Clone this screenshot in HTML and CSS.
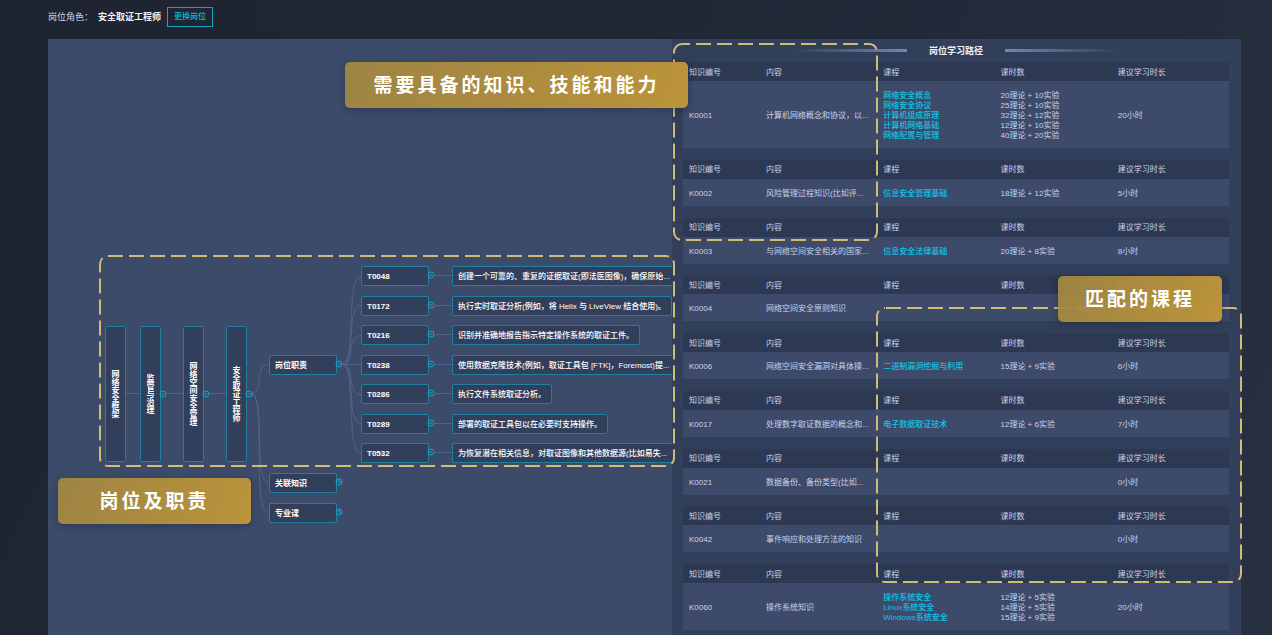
FILE: index.html
```
<!DOCTYPE html>
<html lang="zh-CN">
<head>
<meta charset="utf-8">
<title>岗位学习路径</title>
<link rel="stylesheet" href="styles.css">
</head>
<body>
<svg class="symbols" aria-hidden="true">
  <symbol id="minus" viewBox="0 0 8 8"><circle cx="4" cy="4" r="3" fill="none" stroke="currentColor"/><path d="M2.6 4h2.8" stroke="currentColor"/></symbol>
  <symbol id="plus" viewBox="0 0 8 8"><circle cx="4" cy="4" r="3" fill="none" stroke="currentColor"/><path d="M4 4.2V1.500M4 4.200h2M2.600 2.800L4 4.200" stroke="currentColor" fill="none"/></symbol>
</svg>
<div class="page">
  <header class="topbar">
    <span class="role-label">岗位角色：</span>
    <strong class="role-name">安全取证工程师</strong>
    <button class="switch" type="button">更换岗位</button>
  </header>
  <main class="board">
    <section class="map">
      <svg class="links" width="624" height="596" aria-hidden="true">
        <path d="M77 354.500H92M118 354.500H136M161 354.500H178"/>
        <path d="M203 354.500C217 354.500 205 325.500 221 325.500M203 354.500C218 354.500 204 443.500 221 443.500M203 354.500C220 354.500 202 473.500 221 473.500"/>
        <path d="M294 325.500H313M294 325.500C309 325.500 297 237.500 313 237.500M294 325.500C309 325.500 297 266.500 313 266.500M294 325.500C309 325.500 297 296.500 313 296.500M294 325.500C309 325.500 297 355.500 313 355.500M294 325.500C309 325.500 297 384.500 313 384.500M294 325.500C309 325.500 297 414.500 313 414.500"/>
      </svg>
      <div class="node tall t1">网络安全框架</div>
      <div class="node tall t2">监管与治理<button class="toggle" type="button" aria-label="收起"><svg><use href="#minus"/></svg></button></div>
      <div class="node tall t3">网络空间安全管理<button class="toggle" type="button" aria-label="收起"><svg><use href="#minus"/></svg></button></div>
      <div class="node tall t4">安全取证工程师<button class="toggle" type="button" aria-label="收起"><svg><use href="#minus"/></svg></button></div>
      <div class="node fixed duty">岗位职责<button class="toggle" type="button" aria-label="收起"><svg><use href="#minus"/></svg></button></div>
      <div class="node fixed related">关联知识<button class="toggle" type="button" aria-label="展开"><svg><use href="#plus"/></svg></button></div>
      <div class="node fixed major">专业课<button class="toggle" type="button" aria-label="展开"><svg><use href="#plus"/></svg></button></div>
      <ul class="tasks">
        <li><div class="node fixed">T0048<button class="toggle" type="button" aria-label="收起"><svg><use href="#minus"/></svg></button></div><div class="node">创建一个可靠的、重复的证据取证(即法医图像)，确保原始...</div></li>
        <li><div class="node fixed">T0172<button class="toggle" type="button" aria-label="收起"><svg><use href="#minus"/></svg></button></div><div class="node">执行实时取证分析(例如，将 Helix 与 LiveView 结合使用)。</div></li>
        <li><div class="node fixed">T0216<button class="toggle" type="button" aria-label="收起"><svg><use href="#minus"/></svg></button></div><div class="node">识别并准确地报告指示特定操作系统的取证工件。</div></li>
        <li><div class="node fixed">T0238<button class="toggle" type="button" aria-label="收起"><svg><use href="#minus"/></svg></button></div><div class="node">使用数据克隆技术(例如，取证工具包 [FTK]，Foremost)提...</div></li>
        <li><div class="node fixed">T0286<button class="toggle" type="button" aria-label="收起"><svg><use href="#minus"/></svg></button></div><div class="node">执行文件系统取证分析。</div></li>
        <li><div class="node fixed">T0289<button class="toggle" type="button" aria-label="收起"><svg><use href="#minus"/></svg></button></div><div class="node">部署的取证工具包以在必要时支持操作。</div></li>
        <li><div class="node fixed">T0532<button class="toggle" type="button" aria-label="收起"><svg><use href="#minus"/></svg></button></div><div class="node">为恢复潜在相关信息，对取证图像和其他数据源(比如易失...</div></li>
      </ul>
    </section>
    <section class="path">
      <h2 class="path-title">岗位学习路径</h2>
      <div class="tables">
        <table>
          <thead><tr><th class="id">知识编号</th><th>内容</th><th>课程</th><th>课时数</th><th>建议学习时长</th></tr></thead>
          <tbody><tr><td>K0001</td><td>计算机网络概念和协议，以...</td><td><a href="#">网络安全概念</a><a href="#">网络安全协议</a><a href="#">计算机组成原理</a><a href="#">计算机网络基础</a><a href="#">网络配置与管理</a></td><td>20理论 + 10实验<br>25理论 + 10实验<br>32理论 + 12实验<br>12理论 + 10实验<br>40理论 + 20实验</td><td>20小时</td></tr></tbody>
        </table>
        <table>
          <thead><tr><th class="id">知识编号</th><th>内容</th><th>课程</th><th>课时数</th><th>建议学习时长</th></tr></thead>
          <tbody><tr><td>K0002</td><td>风险管理过程知识(比如评...</td><td><a href="#">信息安全管理基础</a></td><td>18理论 + 12实验</td><td>5小时</td></tr></tbody>
        </table>
        <table>
          <thead><tr><th class="id">知识编号</th><th>内容</th><th>课程</th><th>课时数</th><th>建议学习时长</th></tr></thead>
          <tbody><tr><td>K0003</td><td>与网络空间安全相关的国家...</td><td><a href="#">信息安全法律基础</a></td><td>20理论 + 8实验</td><td>8小时</td></tr></tbody>
        </table>
        <table>
          <thead><tr><th class="id">知识编号</th><th>内容</th><th>课程</th><th>课时数</th><th>建议学习时长</th></tr></thead>
          <tbody><tr><td>K0004</td><td>网络空间安全原则知识</td><td></td><td></td><td>0小时</td></tr></tbody>
        </table>
        <table>
          <thead><tr><th class="id">知识编号</th><th>内容</th><th>课程</th><th>课时数</th><th>建议学习时长</th></tr></thead>
          <tbody><tr><td>K0006</td><td>网络空间安全漏洞对具体操...</td><td><a href="#">二进制漏洞挖掘与利用</a></td><td>15理论 + 9实验</td><td>6小时</td></tr></tbody>
        </table>
        <table>
          <thead><tr><th class="id">知识编号</th><th>内容</th><th>课程</th><th>课时数</th><th>建议学习时长</th></tr></thead>
          <tbody><tr><td>K0017</td><td>处理数字取证数据的概念和...</td><td><a href="#">电子数据取证技术</a></td><td>12理论 + 6实验</td><td>7小时</td></tr></tbody>
        </table>
        <table>
          <thead><tr><th class="id">知识编号</th><th>内容</th><th>课程</th><th>课时数</th><th>建议学习时长</th></tr></thead>
          <tbody><tr><td>K0021</td><td>数据备份、备份类型(比如...</td><td></td><td></td><td>0小时</td></tr></tbody>
        </table>
        <table>
          <thead><tr><th class="id">知识编号</th><th>内容</th><th>课程</th><th>课时数</th><th>建议学习时长</th></tr></thead>
          <tbody><tr><td>K0042</td><td>事件响应和处理方法的知识</td><td></td><td></td><td>0小时</td></tr></tbody>
        </table>
        <table>
          <thead><tr><th class="id">知识编号</th><th>内容</th><th>课程</th><th>课时数</th><th>建议学习时长</th></tr></thead>
          <tbody><tr><td>K0060</td><td>操作系统知识</td><td><a href="#">操作系统安全</a><a href="#">Linux系统安全</a><a href="#">Windows系统安全</a></td><td>12理论 + 5实验<br>14理论 + 5实验<br>15理论 + 9实验</td><td>20小时</td></tr></tbody>
        </table>
      </div>
    </section>
  </main>
  <svg class="frames" width="1272" height="635" aria-hidden="true">
    <rect x="674" y="44" width="203" height="196" rx="8" stroke-dashoffset="7"/>
    <rect x="100" y="256" width="574" height="210" rx="8"/>
    <rect x="877" y="308" width="364" height="274" rx="8" stroke-dashoffset="-1"/>
  </svg>
  <div class="callout need">需要具备的知识、技能和能力</div>
  <div class="callout post">岗位及职责</div>
  <div class="callout match">匹配的课程</div>
</div>
</body>
</html>
```
FILE: styles.css
```
* { box-sizing: border-box; }
body {
  margin: 0;
  font: 8px/10px "Liberation Sans", "Noto Sans CJK SC", sans-serif;
  color: #cbd3e6;
  background: #1f2532;
}
.symbols { position: absolute; width: 0; height: 0; }
.page {
  position: relative;
  display: flex;
  flex-direction: column;
  min-height: 100vh;
  padding: 0 31px 0 48px;
  overflow: hidden;
  background: linear-gradient(115deg, #1e2430 0%, #202735 45%, #283041 100%);
}
.topbar {
  display: flex;
  align-items: center;
  height: 39px;
  padding-bottom: 5px;
  font-size: 9px;
}
.role-name { margin: 0 6px 0 5px; color: #f1f3f8; }
.switch {
  height: 20px;
  padding: 0 6px;
  border: 1px solid #12a5c2;
  background: none;
  color: #16b5d3;
  font: inherit;
  font-size: 8px;
  font-weight: 500;
}
.board { flex: 1; display: grid; grid-template-columns: 624fr 569fr; }

.map { position: relative; overflow: hidden; background: #3d4b6b; }
.links { position: absolute; top: 0; left: 0; }
.links path { fill: none; stroke: #50638a; }
.node {
  position: relative;
  height: 20px;
  padding: 0 5px;
  border: 1px solid #21809f;
  border-radius: 2px;
  background: #323f5b;
  color: #fff;
  font-weight: 500;
  line-height: 19px;
  white-space: nowrap;
}
.fixed { width: 68px; }
.toggle {
  position: absolute;
  top: 4px;
  right: -7px;
  width: 8px;
  height: 8px;
  padding: 0;
  border: 0;
  background: none;
  color: #14a6c8;
}
.toggle svg { display: block; width: 8px; height: 8px; }
.tall {
  position: absolute;
  top: 287px;
  width: 21px;
  height: 136px;
  padding: 0;
  font-weight: bold;
  line-height: 21px;
  text-align: center;
  writing-mode: vertical-rl;
}
.tall .toggle { top: 63px; }
.t1 { left: 57px; }
.t2 { left: 92px; }
.t3 { left: 135px; }
.t4 { left: 178px; }
.duty, .related, .major { position: absolute; left: 221px; font-weight: bold; }
.duty { top: 316px; }
.related { top: 434px; }
.major { top: 464px; }
.tasks {
  position: absolute;
  top: 227px;
  left: 313px;
  display: flex;
  flex-direction: column;
  justify-content: space-between;
  height: 197px;
  margin: 0;
  padding: 0;
  list-style: none;
}
.tasks li {
  display: flex;
  gap: 23px;
  background: linear-gradient(#50638a, #50638a) 74px 9px / 17px 1px no-repeat;
}
.tasks .fixed { font-weight: bold; }

.path {
  display: flex;
  flex-direction: column;
  padding: 0 12px 5px 11px;
  background: #323f5a;
}
.path-title {
  display: flex;
  align-items: center;
  justify-content: center;
  gap: 22px;
  height: 23px;
  margin: 0;
  color: #eef1f7;
  font-size: 9px;
}
.path-title::before, .path-title::after {
  content: "";
  width: 115px;
  height: 3px;
  background: linear-gradient(90deg, transparent, #7685ab);
}
.path-title::after { background: linear-gradient(270deg, transparent, #7685ab); }
.tables { flex: 1; display: flex; flex-direction: column; justify-content: space-between; }
table { width: 100%; table-layout: fixed; border-collapse: collapse; background: #3d4a6a; }
th, td { text-align: left; font-weight: normal; white-space: nowrap; }
th { height: 19px; padding: 2px 0 0 6px; background: #2d3953; color: #cbd3e6; }
td { padding: 10px 0 7px 6px; vertical-align: middle; }
.id { width: 77px; }
td a { display: block; color: #12c2e8; text-decoration: none; font-weight: 500; }

.frames { position: absolute; top: 0; left: 0; }
.frames rect { fill: none; stroke: #d0bc74; stroke-width: 2; stroke-dasharray: 15 6; }
.callout {
  position: absolute;
  height: 46px;
  border-radius: 5px;
  background: linear-gradient(110deg, rgba(163, 135, 66, 0.94), rgba(190, 149, 57, 0.98));
  box-shadow: 0 2px 7px rgba(20, 28, 48, 0.4);
  color: #fff;
  font-size: 19px;
  font-weight: bold;
  letter-spacing: 3px;
  line-height: 47px;
  text-align: center;
  white-space: nowrap;
}
.need { top: 62px; left: 345px; width: 343px; }
.post { top: 478px; left: 58px; width: 193px; }
.match { top: 276px; left: 1058px; width: 164px; }
```
